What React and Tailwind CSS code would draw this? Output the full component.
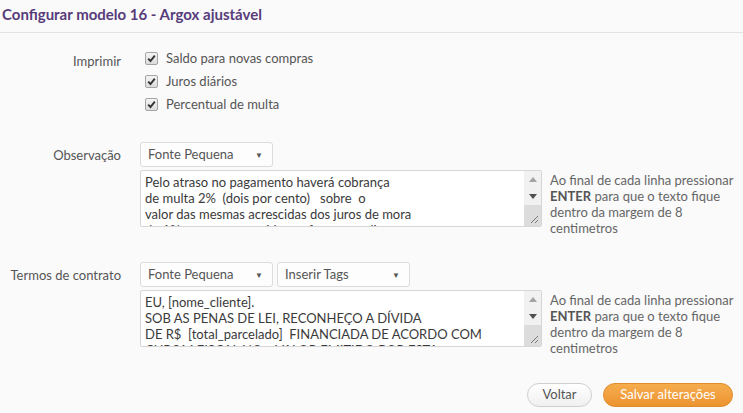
import React from "react";

const Check = () => (
  <span className="flex h-[13px] w-[13px] items-center justify-center rounded-[2px] border border-[#a5a5a5] bg-gradient-to-b from-[#f4f4f4] to-[#dcdcdc]">
    <svg width="9" height="9" viewBox="0 0 9 9">
      <path d="M1.2 4.6 L3.5 7 L7.8 1.6" stroke="#333" strokeWidth="1.9" fill="none" />
    </svg>
  </span>
);

const Select = ({ label, w = "w-[133px]" }) => (
  <div className={`flex h-[25px] ${w} items-center justify-between rounded-[3px] border border-[#dcdcdc] bg-[#fdfdfd] pl-[7px] pr-[9px] text-[13px] text-[#555]`}>
    <span>{label}</span>
    <span className="text-[8px] text-[#555]">▼</span>
  </div>
);

const FakeTextarea = ({ lines }) => (
  <div className="flex h-[57px] w-[402px] overflow-hidden rounded-[2px] border border-[#d6d6d6] bg-white">
    <div className="flex-1 overflow-hidden px-[4px] pt-[3px] text-[13px] leading-[16px] text-[#3a3a3a]">
      {lines.map((l, i) => (
        <div key={i} className="whitespace-pre">{l}</div>
      ))}
    </div>
    <div className="flex w-[17px] flex-col bg-[#f1f1f1]">
      <div className="flex h-[17px] items-center justify-center">
        <svg width="8" height="5" viewBox="0 0 8 5"><path d="M0 5 L4 0 L8 5 Z" fill="#a3a3a3" /></svg>
      </div>
      <div className="flex h-[17px] items-center justify-center">
        <svg width="8" height="5" viewBox="0 0 8 5"><path d="M0 0 L4 5 L8 0 Z" fill="#505050" /></svg>
      </div>
      <div className="flex flex-1 items-end justify-end bg-[#dcdcdc] p-[2px]">
        <svg width="9" height="9" viewBox="0 0 9 9">
          <path d="M1 8 L8 1 M5 8 L8 5" stroke="#777" strokeWidth="1" />
        </svg>
      </div>
    </div>
  </div>
);

const Help = () => (
  <div className="ml-[8px] w-[190px] pt-[2px] text-[13px] leading-[16px] text-[#666]">
    Ao final de cada linha pressionar <b className="text-[#555]">ENTER</b> para que o texto fique dentro da margem de 8 centimetros
  </div>
);

export default function App() {
  return (
    <div className="h-[413px] w-[743px] overflow-hidden bg-[#fafafa] font-['Lato',sans-serif]">
      <div className="h-[33px] border-b border-[#e3e3e3] pl-[2px] pt-[3px] text-[15px] font-bold text-[#573c7a]">
        Configurar modelo 16 - Argox ajustável
      </div>

      <div className="flex pt-[17px]">
        <div className="w-[121px] pt-[2px] text-right text-[13px] text-[#555]">Imprimir</div>
        <div className="ml-[24px] flex flex-col gap-[6px] text-[13px] text-[#555]">
          {["Saldo para novas compras", "Juros diários", "Percentual de multa"].map((t) => (
            <div key={t} className="flex h-[17px] items-center gap-[8px]">
              <Check />
              <span>{t}</span>
            </div>
          ))}
        </div>
      </div>

      <div className="mt-[29px] flex">
        <div className="w-[121px] pt-[4px] text-right text-[13px] text-[#555]">Observação</div>
        <div className="ml-[19px] flex flex-col gap-[3px]">
          <Select label="Fonte Pequena" />
          <div className="flex">
            <FakeTextarea
              lines={[
                "Pelo atraso no pagamento haverá cobrança",
                "de multa 2%  (dois por cento)   sobre  o",
                "valor das mesmas acrescidas dos juros de mora",
                "de 1% ao mes, acrescido em fatura em dia",
              ]}
            />
            <Help />
          </div>
        </div>
      </div>

      <div className="mt-[26px] flex">
        <div className="w-[121px] pt-[4px] text-right text-[13px] text-[#555]">Termos de contrato</div>
        <div className="ml-[19px] flex flex-col gap-[3px]">
          <div className="flex gap-[4px]">
            <Select label="Fonte Pequena" />
            <Select label="Inserir Tags" />
          </div>
          <div className="flex">
            <FakeTextarea
              lines={[
                "EU, [nome_cliente].",
                "SOB AS PENAS DE LEI, RECONHEÇO A DÍVIDA",
                "DE R$  [total_parcelado]  FINANCIADA DE ACORDO COM",
                "CUPOM FISCAL NO    VALOR EMITIDO POR ESTA",
              ]}
            />
            <Help />
          </div>
        </div>
      </div>

      <div className="mt-[27px] flex justify-end gap-[11px] pr-[10px]">
        <button className="h-[24px] w-[65px] rounded-full border border-[#cfcfcf] bg-gradient-to-b from-white to-[#f0f0f0] text-[13px] text-[#555]">
          Voltar
        </button>
        <button className="h-[24px] w-[130px] rounded-full border border-[#e08a2a] bg-gradient-to-b from-[#f6ad4d] to-[#ec9330] text-[13px] text-white">
          Salvar alterações
        </button>
      </div>
    </div>
  );
}
